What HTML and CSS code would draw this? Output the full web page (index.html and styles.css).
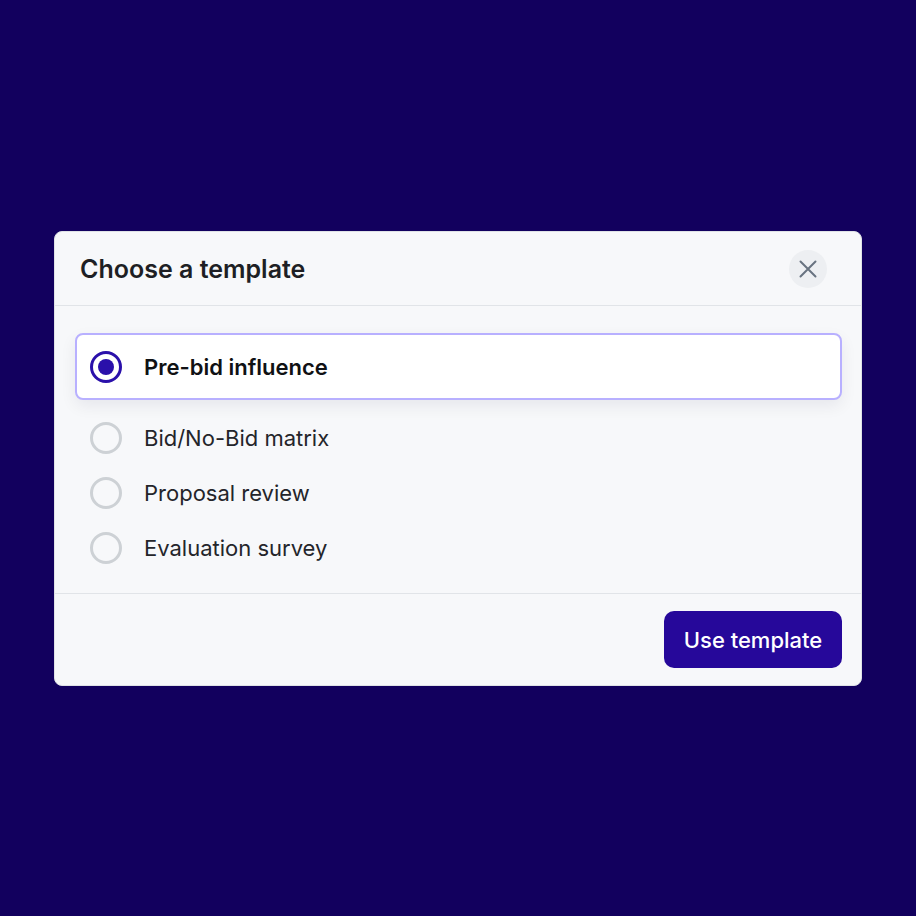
FILE: index.html
```html
<!DOCTYPE html>
<html>
<head>
<meta charset="utf-8">
<link rel="stylesheet" href="styles.css">
</head>
<body>
<div class="page">
  <div class="modal">
    <div class="modal-header">
      <h2 class="title">Choose a template</h2>
      <button class="close" aria-label="Close">
        <svg width="22" height="22" viewBox="0 0 22 22" fill="none" stroke="#687380" stroke-width="2" stroke-linecap="round"><path d="M3.5 3.5 L18.5 18.5 M18.5 3.5 L3.5 18.5"/></svg>
      </button>
    </div>
    <div class="modal-body">
      <div class="option selected"><span class="radio"></span><span class="label">Pre-bid influence</span></div>
      <div class="option"><span class="radio"></span><span class="label">Bid/No-Bid matrix</span></div>
      <div class="option"><span class="radio"></span><span class="label">Proposal review</span></div>
      <div class="option"><span class="radio"></span><span class="label">Evaluation survey</span></div>
    </div>
    <div class="modal-footer">
      <button class="primary">Use template</button>
    </div>
  </div>
</div>
</body>
</html>
```
FILE: styles.css
```css
* { box-sizing: border-box; }
html, body { margin: 0; padding: 0; }
body {
  background: #12005e;
  font-family: Inter, "Noto Sans", sans-serif;
  width: 916px;
  height: 916px;
}
.page {
  padding: 231px 54px 0 54px;
}
.modal {
  width: 808px;
  background: #f7f8fa;
  border-radius: 8px;
  border: 1px solid #dfe2e6;
  overflow: hidden;
}
.modal-header {
  height: 74px;
  display: flex;
  align-items: center;
  justify-content: space-between;
  padding: 0 34px 0 25px;
  border-bottom: 1px solid #e1e4e8;
}
.title {
  margin: 0;
  font-size: 25px;
  font-weight: 600;
  color: #1e1f24;
}
.close {
  width: 38px;
  height: 38px;
  border-radius: 50%;
  border: none;
  background: #edeff2;
  display: flex;
  align-items: center;
  justify-content: center;
  padding: 0;
}
.modal-body {
  padding: 27px 19px 18px 20px;
  display: flex;
  flex-direction: column;
  border-bottom: 1px solid #e1e4e8;
}
.option {
  height: 55px;
  display: flex;
  align-items: center;
  gap: 22px;
  padding: 0 13px;
  border: 2px solid transparent;
  border-radius: 8px;
  font-size: 22px;
  color: #24252a;
}
.option.selected {
  height: 67px;
  margin-bottom: 10px;
  background: #ffffff;
  border-color: #b8b0ff;
  box-shadow: 0 6px 16px rgba(20, 20, 60, 0.07);
  font-weight: 600;
  color: #101114;
}
.radio {
  width: 32px;
  height: 32px;
  border-radius: 50%;
  border: 3px solid #cdd1d5;
  flex: none;
  display: flex;
  align-items: center;
  justify-content: center;
}
.selected .radio {
  border-color: #2a10aa;
}
.selected .radio::after {
  content: "";
  width: 16px;
  height: 16px;
  border-radius: 50%;
  background: #2a10aa;
}
.modal-footer {
  display: flex;
  justify-content: flex-end;
  padding: 17px 19px 17px 0;
}
.primary {
  width: 178px;
  height: 57px;
  border: none;
  border-radius: 10px;
  background: #26089a;
  color: #ffffff;
  font-family: Inter, "Noto Sans", sans-serif;
  font-size: 22px;
  font-weight: 500;
}
```
